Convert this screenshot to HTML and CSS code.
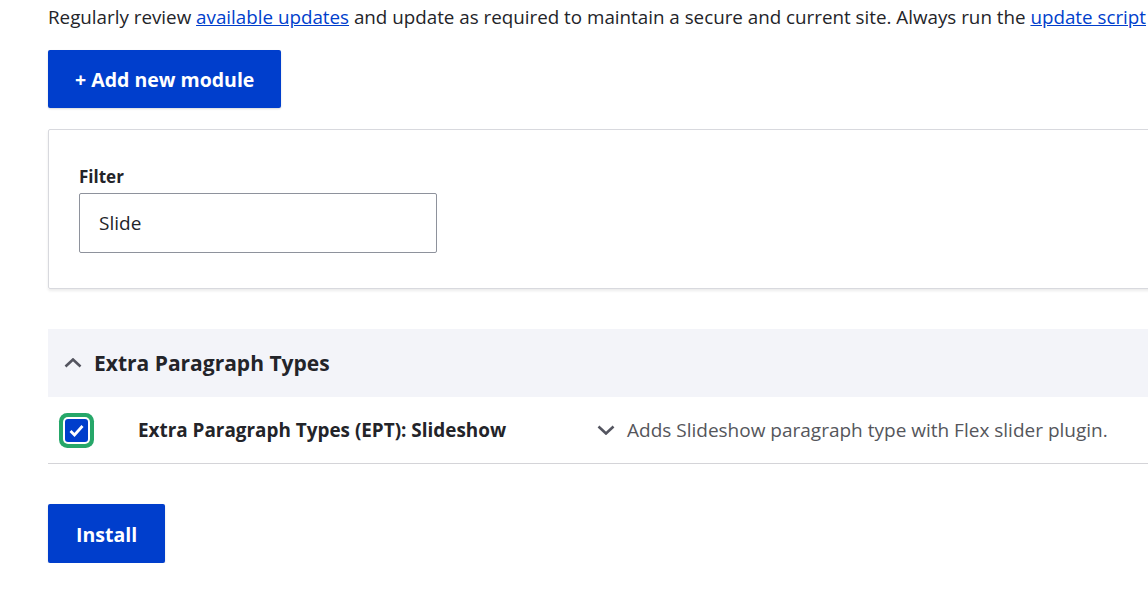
FILE: index.html
```html
<!doctype html>
<html lang="en">
<head>
	<meta charset="UTF-8">
	<title>Extend</title>
	<link rel="stylesheet" href="styles.css">
</head>
<body>
	<div class="page">
		<p class="intro">Regularly review <a href="#">available updates</a> and update as required to maintain a secure and current site. Always run the <a href="#">update script</a> each time a module is updated.</p>

		<div class="actions">
			<a class="button" href="#">+ Add new module</a>
		</div>

		<div class="filter-card">
			<label class="form-label" for="edit-text">Filter</label>
			<input class="form-text" id="edit-text" type="search" value="Slide">
		</div>

		<div class="package">
			<div class="package-summary">
				<svg class="chevron" width="18" height="10" viewBox="0 0 18 10">
					<path d="M1.5 8.5 L9 1.5 L16.5 8.5" fill="none" stroke="#545560" stroke-width="2.6"/>
				</svg>
				<span>Extra Paragraph Types</span>
			</div>
			<div class="module-row">
				<div class="check-cell">
					<span class="checkbox">
						<svg width="17" height="15" viewBox="0 0 17 15">
							<path d="M2.5 8 L6.5 12 L14.5 3" fill="none" stroke="#fff" stroke-width="2.8"/>
						</svg>
					</span>
				</div>
				<div class="module-name">Extra Paragraph Types (EPT): Slideshow</div>
				<div class="module-desc">
					<svg class="chevron" width="18" height="10" viewBox="0 0 18 10">
						<path d="M1.5 1.5 L9 8.5 L16.5 1.5" fill="none" stroke="#545560" stroke-width="2.6"/>
					</svg>
					<span>Adds Slideshow paragraph type with Flex slider plugin.</span>
				</div>
			</div>
		</div>

		<div class="actions bottom">
			<a class="button" href="#">Install</a>
		</div>
	</div>
</body>
</html>
```
FILE: styles.css
```css
	body{
		margin:0;
		overflow:hidden;
		background:#fff;
		color:#232429;
		font-family:"Open Sans","Noto Sans",sans-serif;
		font-size:18.8px;
	}
	.page{
		width:1200px;
		padding:0 0 0 48px;
		margin-top:-10px;
	}
	.intro{
		margin:0;
		line-height:54px;
		white-space:nowrap;
	}
	.intro a{
		color:#003ecc;
	}
	.actions{
		display:flex;
		padding:6px 0 21px;
	}
	.actions.bottom{
		padding:40px 0 0;
	}
	.button{
		display:inline-block;
		padding:1px 27px 0;
		height:58px;
		box-sizing:border-box;
		line-height:58px;
		background:#003ecc;
		color:#fff;
		font-weight:700;
		font-size:19.5px;
		text-decoration:none;
		border-radius:2px;
		box-shadow:0 1px 2px rgba(0,0,0,0.15);
	}
	.bottom .button{
		height:59px;
		padding:2px 28px 0;
	}
	.filter-card{
		border:1px solid #d8d9de;
		border-radius:2px;
		box-shadow:0 2px 3px rgba(0,0,0,0.08);
		padding:35px 30px 35px;
		display:flex;
		flex-direction:column;
	}
	.form-label{
		font-weight:700;
		font-size:17px;
		line-height:24px;
		margin-bottom:4px;
	}
	.form-text{
		width:358px;
		height:60px;
		box-sizing:border-box;
		border:1px solid #8e929c;
		border-radius:2px;
		padding:0 19px;
		font-family:inherit;
		font-size:19px;
		color:#232429;
		-webkit-appearance:none;
	}
	.package{
		margin-top:40px;
	}
	.package-summary{
		height:68px;
		background:#f3f4f9;
		display:flex;
		align-items:center;
		padding-left:16px;
		gap:12px;
		font-weight:700;
		font-size:21px;
	}
	.module-row{
		display:flex;
		align-items:center;
		height:66px;
		border-bottom:1px solid #d4d4d8;
	}
	.check-cell{
		width:90px;
		display:flex;
		padding-left:17px;
		box-sizing:border-box;
	}
	.checkbox{
		width:23px;
		height:23px;
		background:#003ecc;
		display:flex;
		align-items:center;
		justify-content:center;
		box-shadow:0 0 0 2px #fff,0 0 0 6px #26a769;
		border-radius:3px;
	}
	.module-name{
		width:459px;
		font-weight:700;
		font-size:18.9px;
	}
	.module-desc{
		display:flex;
		align-items:center;
		gap:12px;
		color:#55565b;
		font-size:19px;
	}
```
